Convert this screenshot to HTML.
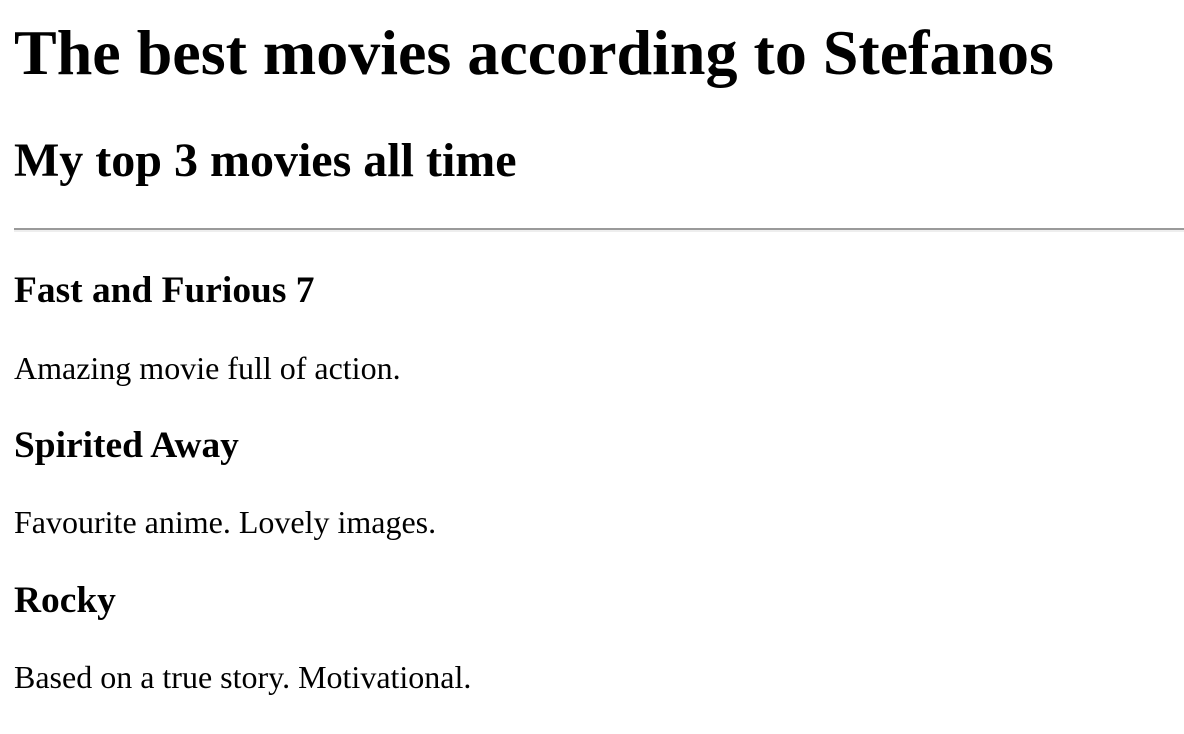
<!DOCTYPE html>
<html>
<head>
<meta charset="utf-8">
<style>
html { zoom: 2; }
body { margin: 8px 0 8px 7px; font-family: "Liberation Serif", serif; color: #000; background: #fff; }
h1 { font-size: 32px; margin: 5.44px 0 21.44px; }
h2 { font-size: 24px; margin: 19.92px 0; }
h3 { font-size: 18.72px; margin: 18.72px 0; }
p { font-size: 16px; margin: 16px 0; }
hr { margin: 8px 0; border: 0; border-top: 1px solid #9a9a9a; border-bottom: 1px solid #eee; }
</style>
</head>
<body>
<h1>The best movies according to Stefanos</h1>
<h2>My top 3 movies all time</h2>
<hr>
<h3>Fast and Furious 7</h3>
<p>Amazing movie full of action.</p>
<h3>Spirited Away</h3>
<p>Favourite anime. Lovely images.</p>
<h3>Rocky</h3>
<p>Based on a true story. Motivational.</p>
</body>
</html>
